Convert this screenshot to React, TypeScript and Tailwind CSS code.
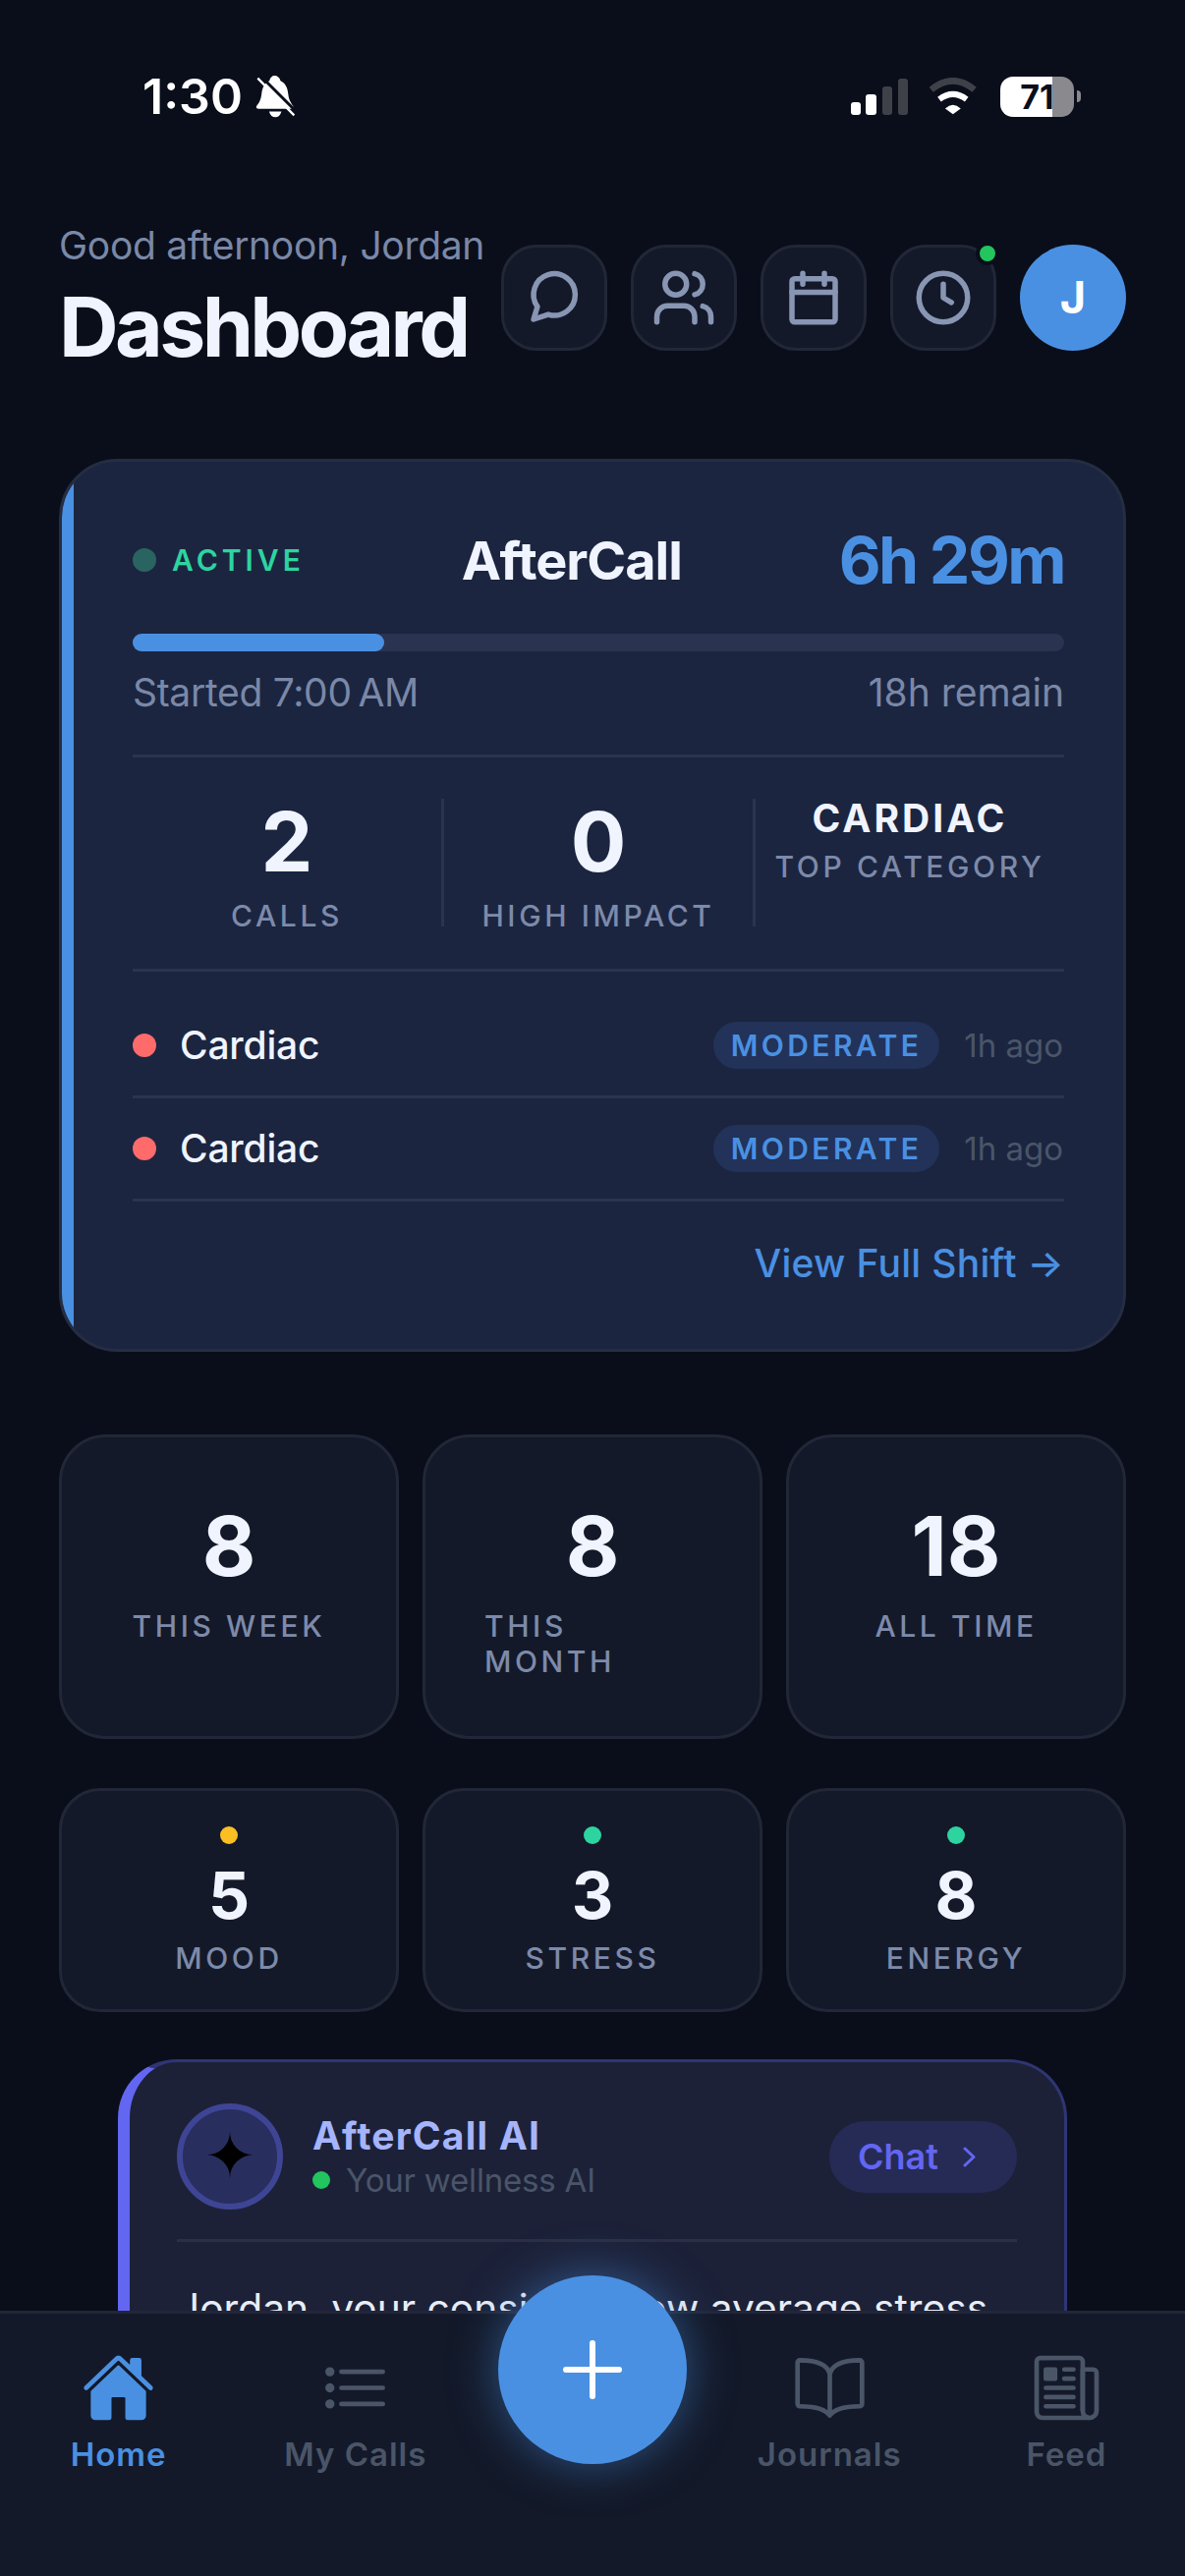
import React from "react";
import { Users } from "lucide-react";
import { IoHome, IoListOutline, IoBookOutline, IoNewspaperOutline } from "react-icons/io5";

function StatusBar() {
  return (
    <div className="mt-[77px] flex h-[42px] items-center justify-between pl-[145px] pr-[106px]">
      <div className="flex items-center gap-[12px]">
        <span className="text-[50px] font-semibold leading-[42px] text-white">1:30</span>
        <svg width="43" height="47" viewBox="380 45 130 140">
          <path fill="#fff" d="M442 50C450 50 458 56 460 66C478 74 482 92 484 108C486 125 492 133 498 142C502 148 498 152 492 152L392 152C385 152 384 146 388 141C396 131 400 122 402 105C404 88 410 74 426 66C428 56 434 50 442 50Z" />
          <path fill="#fff" d="M425 160H463C460 172 452 178 444 178C436 178 428 172 425 160Z" />
          <path stroke="#0a0e1a" strokeWidth="9" d="M398 50L512 164" />
          <path stroke="#fff" strokeWidth="7" d="M390 58L502 172" />
        </svg>
      </div>
      <div className="flex items-center">
        <svg width="58" height="37" viewBox="0 0 58 37" className="mr-[20px]">
          <rect x="0" y="24" width="10" height="13" rx="3" fill="#fff" />
          <rect x="15" y="16" width="11" height="21" rx="3" fill="#fff" />
          <rect x="32" y="8" width="10" height="29" rx="3" fill="#3f4149" />
          <rect x="48" y="0" width="10" height="37" rx="3" fill="#3f4149" />
        </svg>
        <svg width="52" height="38" viewBox="315 55 155 115" className="mr-[22px]">
          <path d="M325 92Q392 38 458 92" fill="none" stroke="#3f4149" strokeWidth="20" />
          <path d="M350 122Q392 90 434 122" fill="none" stroke="#fff" strokeWidth="18" />
          <path d="M368 150Q392 128 416 150L392 168Z" fill="#fff" />
        </svg>
        <div className="flex h-[41px] w-[75px] items-center justify-center rounded-[13px] bg-[linear-gradient(90deg,#ffffff_71%,#8a8a8e_71%)] text-[34px] font-bold leading-[41px] text-[#0a0e1a]">
          71
        </div>
        <div className="ml-[3px] h-[12px] w-[4px] rounded-r-[4px] bg-[#8a8a8e]" />
      </div>
    </div>
  );
}

function IconButton({ children, dot }: { children: React.ReactNode; dot?: boolean }) {
  return (
    <div className="relative flex h-[108px] w-[108px] items-center justify-center rounded-[36px] border-[3px] border-[#222738] bg-[#131929] text-[#8896b3]">
      {children}
      {dot && <span className="absolute right-[-6px] top-[-6px] h-[24px] w-[24px] rounded-full border-[4px] border-[#0a0e1a] bg-[#22c55e]" />}
    </div>
  );
}

const iconProps = { width: 66, height: 66, viewBox: "0 0 24 24", fill: "none", stroke: "currentColor", strokeWidth: 2, strokeLinecap: "round" as const, strokeLinejoin: "round" as const };

function Header() {
  return (
    <div className="mt-[108px] flex items-center justify-between px-[60px]">
      <div className="flex flex-col">
        <span className="text-[39px] leading-[46px] tracking-[-0.3px] text-[#7a88a8]">Good afternoon, Jordan</span>
        <span className="mt-[14px] text-[84px] font-bold leading-[92px] tracking-[-3.6px] text-[#f0f4ff]">Dashboard</span>
      </div>
      <div className="flex items-center gap-[24px]">
        <IconButton>
          <svg {...iconProps}><path d="M9.8 18.2A7.7 7.7 0 1 0 5.8 15.3L4.4 20Z" /></svg>
        </IconButton>
        <IconButton>
          <Users size={66} strokeWidth={2} />
        </IconButton>
        <IconButton>
          <svg {...iconProps}>
            <rect x="4" y="5" width="16" height="16" rx="1" />
            <path d="M8 3v4M16 3v4M4 10h16" />
          </svg>
        </IconButton>
        <IconButton dot>
          <svg {...iconProps}>
            <circle cx="12" cy="12" r="9" />
            <path d="M12 7v5l3 1.8" />
          </svg>
        </IconButton>
        <div className="flex h-[108px] w-[108px] items-center justify-center rounded-full bg-[#4a90e2] text-[45px] font-bold text-white">J</div>
      </div>
    </div>
  );
}

function CallRow() {
  return (
    <div className="flex h-[105px] items-center border-b-[3px] border-[#2a3450]">
      <span className="h-[24px] w-[24px] rounded-full bg-[#ff6b6b]" />
      <span className="ml-[24px] text-[39px] font-medium leading-[48px] tracking-[-0.2px] text-[#f0f4ff]">Cardiac</span>
      <span className="ml-auto flex h-[48px] items-center rounded-[24px] bg-[#223258] px-[18px] text-[30px] font-semibold tracking-[3.4px] text-[#4a90e2]">MODERATE</span>
      <span className="ml-[25px] mr-[1px] text-[33px] leading-[48px] text-[#4a5568]">1h ago</span>
    </div>
  );
}

function ShiftCard() {
  return (
    <div className="mx-[60px] mt-[88px] flex overflow-hidden rounded-[60px] border-[3px] border-[#252d42] bg-[#1b2540]">
      <div className="w-[12px] shrink-0 bg-[#4a90e2]" />
      <div className="flex-1 px-[60px] pb-[63px] pt-[60px]">
        <div className="flex h-[80px] items-center justify-between">
          <div className="flex items-center gap-[16px]">
            <span className="h-[24px] w-[24px] rounded-full bg-[#2a6460]" />
            <span className="text-[30px] font-semibold tracking-[4px] text-[#2dd4a0]">ACTIVE</span>
          </div>
          <span className="text-[54px] font-bold tracking-[-1px] text-[#f0f4ff]">AfterCall</span>
          <span className="text-[66px] font-bold tracking-[-2.5px] text-[#4a90e2]">6h 29m</span>
        </div>
        <div className="mt-[35px] h-[18px] rounded-full bg-[#2a3450]">
          <div className="h-full w-[27%] rounded-full bg-[#4a90e2]" />
        </div>
        <div className="mt-[18px] flex justify-between text-[39px] leading-[48px] text-[#7a88a8]">
          <span className="tracking-[-0.3px]">{"Started 7:00\u202fAM"}</span>
          <span>18h remain</span>
        </div>
        <div className="mt-[39px] h-[3px] bg-[#2a3450]" />
        <div className="mt-[42px] flex h-[130px]">
          <div className="flex flex-1 flex-col items-center border-r-[3px] border-[#2a3450] pt-[2px]">
            <span className="text-[84px] font-bold leading-[84px] text-[#f0f4ff]">2</span>
            <span className="mt-[21px] text-[30px] font-medium leading-[24px] tracking-[3.6px] text-[#7d8aaa]">CALLS</span>
          </div>
          <div className="flex flex-1 flex-col items-center border-r-[3px] border-[#2a3450] pt-[2px]">
            <span className="text-[84px] font-bold leading-[84px] text-[#f0f4ff]">0</span>
            <span className="mt-[21px] text-[30px] font-medium leading-[24px] tracking-[3.6px] text-[#7d8aaa]">HIGH IMPACT</span>
          </div>
          <div className="flex flex-1 flex-col items-center">
            <span className="text-[39px] font-bold leading-[40px] tracking-[3px] text-[#f0f4ff]">CARDIAC</span>
            <span className="mt-[17px] text-[30px] font-medium leading-[24px] tracking-[3.6px] text-[#7d8aaa]">TOP CATEGORY</span>
          </div>
        </div>
        <div className="mt-[43px] h-[3px] bg-[#2a3450]" />
        <div className="mt-[24px]">
          <CallRow />
          <CallRow />
        </div>
        <div className="mt-[39px] text-right text-[39px] font-medium leading-[48px] tracking-[0.3px] text-[#4a90e2]">View Full Shift →</div>
      </div>
    </div>
  );
}

function StatCard({ value, label }: { value: string; label: string }) {
  return (
    <div className="flex flex-col items-center rounded-[48px] border-[3px] border-[#222738] bg-[#131929] px-[60px] pb-[58px] pt-[69px]">
      <span className="text-[84px] font-bold leading-[84px] text-[#f0f4ff]">{value}</span>
      <span className="mt-[21px] text-[30px] font-medium leading-[36px] tracking-[3.6px] text-[#7d8aaa]">{label}</span>
    </div>
  );
}

function WellnessCard({ value, label, color }: { value: string; label: string; color: string }) {
  return (
    <div className="flex flex-col items-center rounded-[42px] border-[3px] border-[#222738] bg-[#131929] pb-[40px] pt-[36px]">
      <span className={`h-[18px] w-[18px] rounded-full ${color}`} />
      <span className="mt-[19px] text-[66px] font-bold leading-[66px] text-[#f0f4ff]">{value}</span>
      <span className="mt-[19px] text-[30px] font-medium leading-[24px] tracking-[3.6px] text-[#7d8aaa]">{label}</span>
    </div>
  );
}

function AiCard() {
  return (
    <div className="ml-[120px] mt-[48px] w-[966px] rounded-[60px] border-[3px] border-l-[12px] border-[#2f3574] border-l-[#6366f1] bg-[#1c2138] pb-[60px] pl-[48px] pr-[48px] pt-[42px]">
      <div className="flex items-center">
        <div className="flex h-[108px] w-[108px] items-center justify-center rounded-full border-[6px] border-[#3f4595] bg-[#282e5e] font-['DejaVu_Sans'] text-[62px] leading-none text-black">✦</div>
        <div className="ml-[30px] flex flex-col">
          <span className="text-[39px] font-bold leading-[48px] tracking-[1.2px] text-[#a5b4fc]">AfterCall AI</span>
          <span className="flex items-center text-[33px] leading-[42px] tracking-[-0.2px] text-[#4a5568]">
            <span className="mr-[16px] h-[18px] w-[18px] rounded-full bg-[#22c55e]" />
            Your wellness AI
          </span>
        </div>
        <div className="ml-auto flex h-[73px] w-[191px] items-center gap-[25px] rounded-[36px] bg-[#262b55] pl-[29px] text-[36px] font-semibold text-[#6366f1]">
          <span>Chat</span>
          <svg width="13" height="21" viewBox="0 0 13 21" fill="none" stroke="currentColor" strokeWidth="3" strokeLinecap="round" strokeLinejoin="round"><path d="M2 2l9 8.5L2 19" /></svg>
        </div>
      </div>
      <div className="mt-[30px] h-[3px] bg-[#2a2f45]" />
      <p className="mt-[38px] text-[40.7px] leading-[60px] text-[#e8edf5]">Jordan, your consistent low average stress</p>
    </div>
  );
}

function NavItem({ icon, label, active }: { icon: React.ReactNode; label: string; active?: boolean }) {
  return (
    <div className={`flex flex-col items-center ${active ? "text-[#4a90e2]" : "text-[#4a5568]"}`}>
      <div className="flex h-[78px] items-center justify-center">{icon}</div>
      <span className="mt-[11px] text-[33px] font-semibold leading-[36px] tracking-[1px]">{label}</span>
    </div>
  );
}

export default function App() {
  return (
    <div className="relative h-[2622px] w-[1206px] overflow-hidden bg-[#0a0e1a] font-['Inter',sans-serif]">
      <StatusBar />
      <Header />
      <ShiftCard />
      <div className="mx-[60px] mt-[84px] grid grid-cols-3 gap-[24px]">
        <StatCard value="8" label="THIS WEEK" />
        <StatCard value="8" label="THIS MONTH" />
        <StatCard value="18" label="ALL TIME" />
      </div>
      <div className="mx-[60px] mt-[50px] grid grid-cols-3 gap-[24px]">
        <WellnessCard value="5" label="MOOD" color="bg-[#fbbf24]" />
        <WellnessCard value="3" label="STRESS" color="bg-[#2dd4a0]" />
        <WellnessCard value="8" label="ENERGY" color="bg-[#2dd4a0]" />
      </div>
      <AiCard />
      <nav className="absolute inset-x-0 top-[2352px] grid h-[270px] grid-cols-5 border-t-[3px] border-[#222738] bg-[#131929] pt-[36px]">
        <NavItem active label="Home" icon={<IoHome size={75} />} />
        <NavItem label="My Calls" icon={<IoListOutline size={75} />} />
        <div />
        <NavItem label="Journals" icon={<IoBookOutline size={75} />} />
        <NavItem label="Feed" icon={<IoNewspaperOutline size={75} />} />
      </nav>
      <div className="absolute left-1/2 top-[2316px] flex h-[192px] w-[192px] -translate-x-1/2 items-center justify-center rounded-full bg-[#4a90e2] shadow-[0_0_48px_rgba(74,144,226,0.5)]">
        <svg width="60" height="60" viewBox="0 0 60 60" stroke="#fff" strokeWidth="6" strokeLinecap="round"><path d="M30 3v54M3 30h54" /></svg>
      </div>
    </div>
  );
}
